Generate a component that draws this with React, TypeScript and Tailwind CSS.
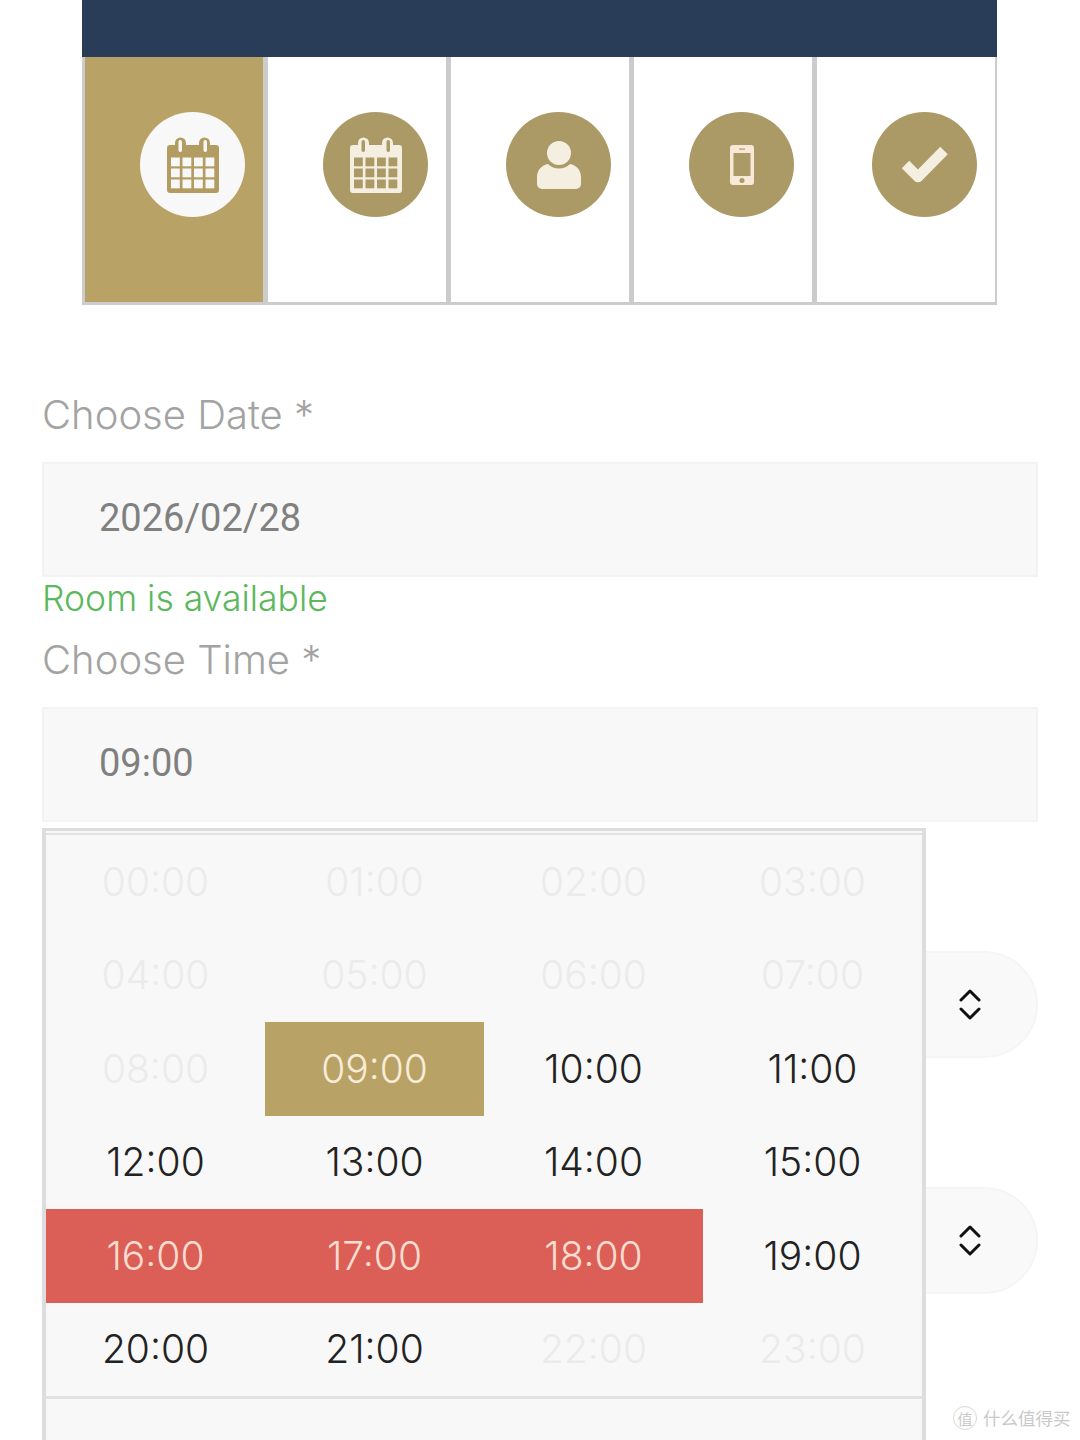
import React from 'react';

const steps = ['date', 'date', 'user', 'phone', 'check'];

const StepIcon = ({ kind, active }: { kind: string; active: boolean }) => {
    const fg = active ? '#b29c61' : '#f5efe2';
    const bg = active ? '#f8f8f8' : '#ab9a66';
    if (kind === 'date') {
        const cells = [];
        for (let r = 0; r < 3; r++) {
            for (let c = 0; c < 4; c++) {
                cells.push(<rect key={`${r}-${c}`} x={4 + c * 11.5} y={20.5 + r * 11} width={8.8} height={8.8} fill={bg} />);
            }
        }
        return (
            <svg width="52" height="56" viewBox="0 0 52 56" fill="none">
                <path d="M3 8h5V6a5.500 5.500 0 0 1 11 0v2h13V6a5.500 5.500 0 0 1 11 0v2h6a3 3 0 0 1 3 3v42a3 3 0 0 1-3 3H3a3 3 0 0 1-3-3V11a3 3 0 0 1 3-3z" fill={fg} />
                <rect x="11.500" y="3" width="3.500" height="12" rx="1.700" fill={bg} />
                <rect x="36.500" y="3" width="3.500" height="12" rx="1.700" fill={bg} />
                {cells}
            </svg>
        );
    }
    if (kind === 'user') {
        return (
            <svg width="44" height="48" viewBox="0 0 44 48" fill="none">
                <circle cx="22" cy="12" r="12" fill={fg} />
                <path d="M11 23c3 3 7 4.500 11 4.500S30 26 33 23c6 1 11 6 11 13v7a5 5 0 0 1-5 5H5a5 5 0 0 1-5-5v-7c0-7 5-12 11-13z" fill={fg} />
            </svg>
        );
    }
    if (kind === 'phone') {
        return (
            <svg width="24" height="40" viewBox="0 0 24 40" fill="none">
                <rect width="24" height="40" rx="3" fill="#f7e8d8" />
                <rect x="3.500" y="8" width="17" height="23" fill={bg} />
                <rect x="9" y="3.500" width="6" height="1.200" fill={bg} />
                <circle cx="12" cy="35.500" r="2.500" fill={bg} />
            </svg>
        );
    }
    return (
        <svg width="48" height="40" viewBox="0 0 48 40" fill="none">
            <path d="M4.500 19.500l12.500 12.500L43 5.500" stroke={fg} strokeWidth="10.500" strokeLinejoin="round" />
        </svg>
    );
};

const Chevrons = () => (
    <svg width="22" height="31" viewBox="0 0 22 31" fill="none" stroke="#111111" strokeWidth="3" strokeLinecap="round" strokeLinejoin="round">
        <path d="M2 11l9-9 9 9" />
        <path d="M2 20l9 9 9-9" />
    </svg>
);

type SlotState = 'off' | 'free' | 'picked' | 'busy';

const hourState = (h: number): SlotState => {
    if (h === 9) return 'picked';
    if (h >= 16 && h <= 18) return 'busy';
    if (h < 9 || h > 21) return 'off';
    return 'free';
};

const slotClass: Record<SlotState, string> = {
    off: 'text-[#ebebeb]',
    free: 'text-[#222222]',
    picked: 'bg-[#b8a265] text-[#f8ecd9]',
    busy: 'bg-[#dc5f57] text-[#fbdcd0]',
};

const hours = Array.from({ length: 24 }, (_, i) => i);

export default function App() {
    return (
        <div className="relative h-[1440px] w-[1080px] overflow-hidden bg-white font-['Inter',sans-serif]">
            <div className="ml-[82px] w-[915px]">
                <div className="h-[57px] bg-[#293d58]" />
                <div className="grid h-[248px] grid-cols-[183px_183px_183px_183px_1fr] border-b-[3px] border-l-[3px] border-r-[2px] border-[#cccccc]">
                    {steps.map((kind, i) => {
                        const active = i === 0;
                        return (
                            <div key={i} className={`pl-[55px] pt-[55px] ${i < 4 ? 'border-r-[5px] border-[#cccccc]' : ''} ${active ? 'bg-[#b8a265]' : 'bg-white'}`}>
                                <div className={`flex h-[105px] w-[105px] items-center justify-center rounded-full ${active ? 'bg-[#f8f8f8]' : 'bg-[#ab9a66]'}`}>
                                    <StepIcon kind={kind} active={active} />
                                </div>
                            </div>
                        );
                    })}
                </div>
            </div>

            <div className="relative mx-[42px] mt-[87px]">
                <label className="block text-[40px] leading-[46px] font-light text-[#a3a3a3]">Choose Date *</label>
                <div className="mt-[24px] flex h-[115px] items-center border-2 border-[#f3f3f3] bg-[#f8f8f8] pb-[2px] pl-[55px] font-['Roboto',sans-serif] text-[38px] text-[#808080]">
                    2026/02/28
                </div>
                <p className="mt-[2px] text-[35.500px] leading-[40px] font-light text-[#5cb85c]">Room is available</p>
                <label className="mt-[18px] block text-[40px] leading-[46px] font-light text-[#a3a3a3]">Choose Time *</label>
                <div className="mt-[24px] flex h-[115px] items-center border-2 border-[#f3f3f3] bg-[#f8f8f8] pb-[2px] pl-[55px] font-['Roboto',sans-serif] text-[38px] text-[#808080]">
                    09:00
                </div>

                <div className="mt-[129px] flex h-[107px] items-center justify-end rounded-full border-2 border-[#f5f5f5] bg-[#f9f9f9] pr-[55px]">
                    <Chevrons />
                </div>
                <div className="mt-[129px] flex h-[107px] items-center justify-end rounded-full border-2 border-[#f5f5f5] bg-[#f9f9f9] pr-[55px]">
                    <Chevrons />
                </div>

                {/* time picker popup, sits over the selects below */}
                <div className="absolute top-[436px] left-0 h-[640px] w-[884px] border-x-[4px] border-t-[3px] border-[#dddddd] bg-[#f8f8f8] pt-[2px]">
                    <div className="grid grid-cols-4 border-t-2 border-b-[3px] border-[#e2e2e2]">
                        {hours.map((h) => (
                            <div key={h} className={`flex h-[93.500px] items-center justify-center text-[39px] font-light ${slotClass[hourState(h)]}`}>
                                {`${String(h).padStart(2, '0')}:00`}
                            </div>
                        ))}
                    </div>
                </div>
            </div>

            <div className="absolute top-[1405px] left-[953px] flex items-center gap-[6px] font-['Noto_Sans_CJK_SC',sans-serif] text-[#c9c9c9]">
                <span className="flex h-[24px] w-[24px] items-center justify-center rounded-full border border-[#d8d8d8] text-[15px] leading-none">值</span>
                <span className="text-[17.500px] leading-[26px]">什么值得买</span>
            </div>
        </div>
    );
}
